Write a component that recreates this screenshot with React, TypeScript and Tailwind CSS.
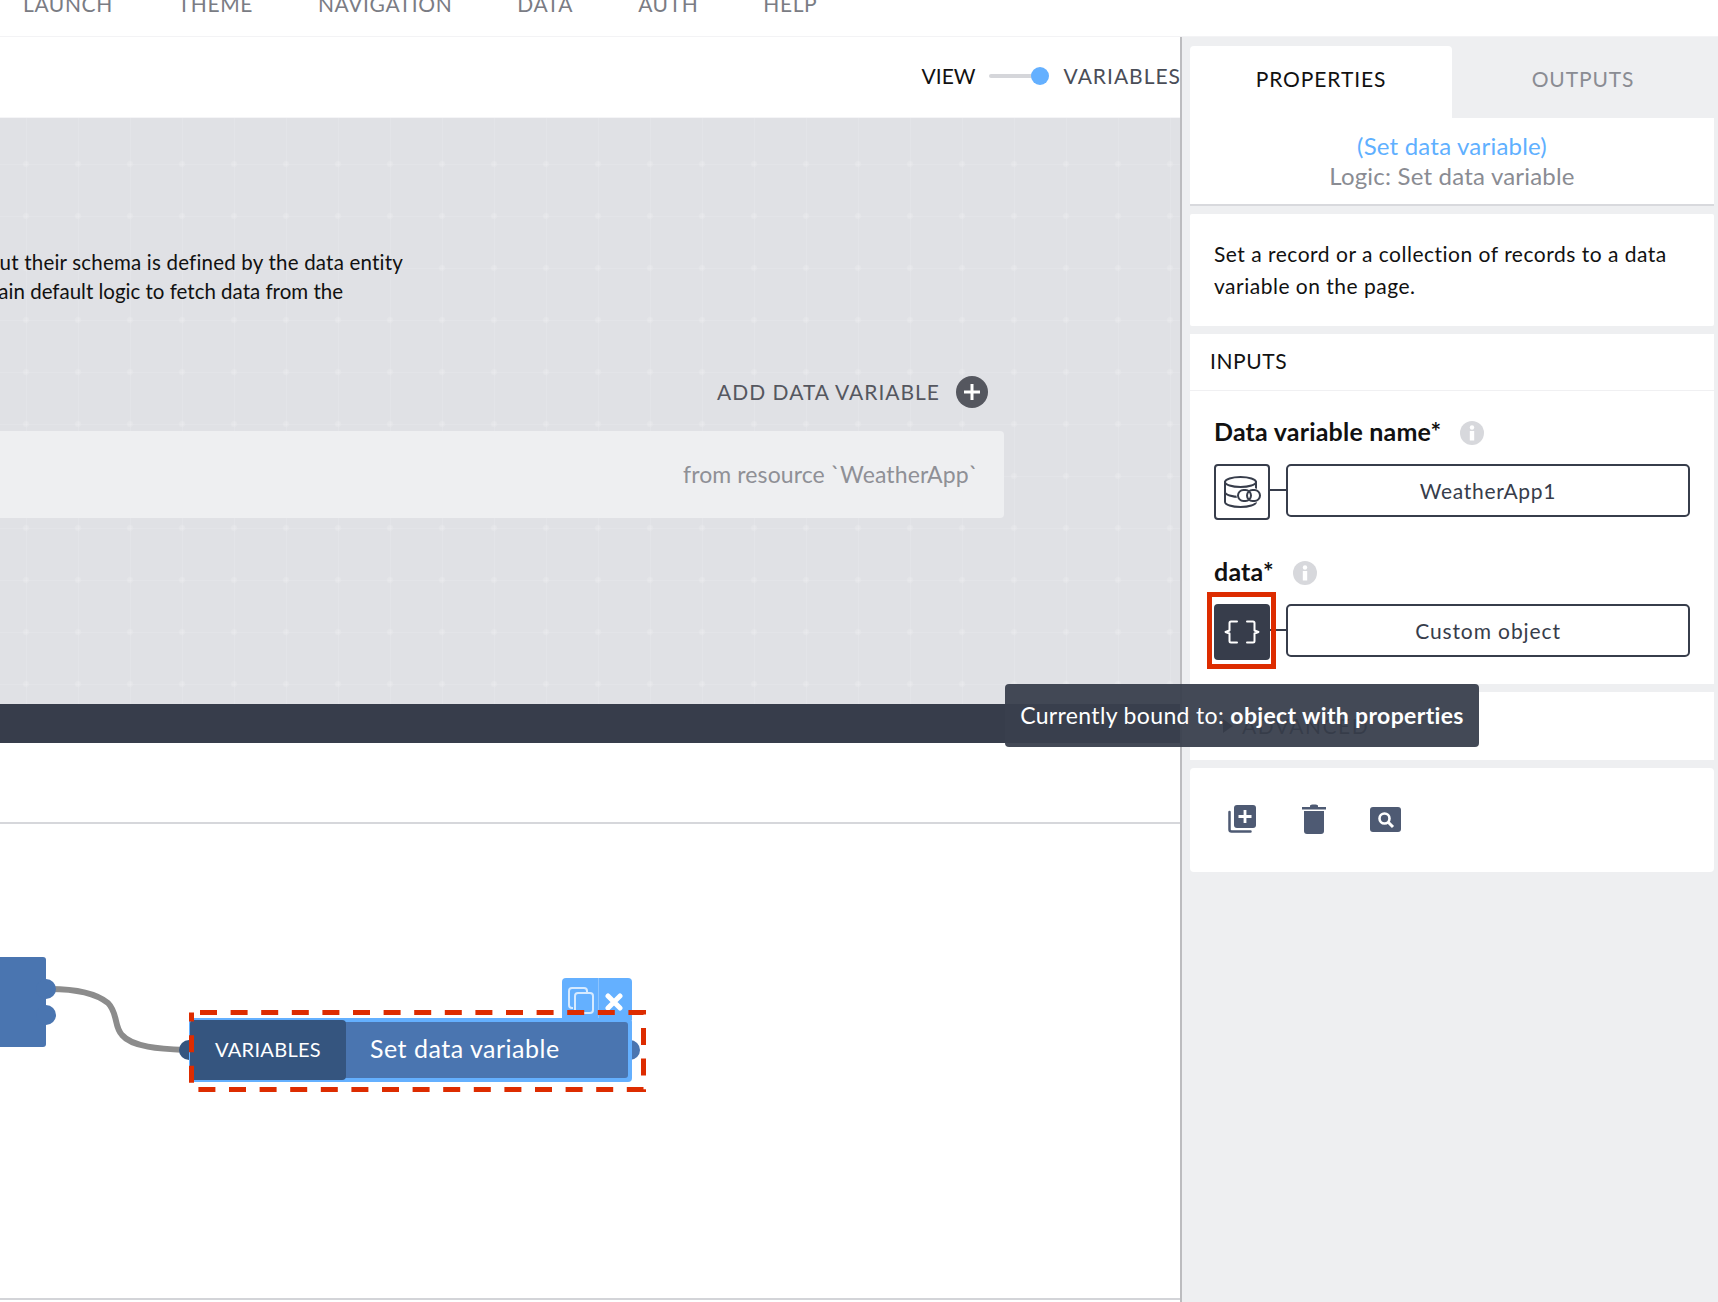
import React from "react";

const NAV = ["LAUNCH", "THEME", "NAVIGATION", "DATA", "AUTH", "HELP"];

function InfoDot() {
  return (
    <svg width="24" height="24" viewBox="0 0 24 24" className="shrink-0">
      <circle cx="12" cy="12" r="12" fill="#d7d8dc" />
      <circle cx="12" cy="6.5" r="2.2" fill="#fff" />
      <rect x="9.8" y="10" width="4.4" height="9.5" fill="#fff" />
    </svg>
  );
}

function DbIcon() {
  return (
    <svg width="37" height="32" viewBox="0 0 37 32" fill="none" stroke="#373d4b" strokeWidth="2" strokeLinecap="round" strokeLinejoin="round">
      <ellipse cx="16.500" cy="6" rx="15.500" ry="5" />
      <path d="M1 6v20c0 2.800 7 5 15.500 5S32 28.800 32 26" />
      <path d="M1 16c0 2.800 7 5 15.500 5" />
      <path d="M32 6v7" />
      <rect x="12.500" y="12" width="24" height="15" rx="7" fill="#fff" stroke="none" />
      <rect x="14" y="14" width="13" height="11" rx="5.500" />
      <rect x="23" y="14" width="13" height="11" rx="5.500" />
    </svg>
  );
}

function BracesIcon() {
  return (
    <svg width="36" height="24" viewBox="0 0 36 24" fill="none" stroke="#fff" strokeWidth="2" strokeLinecap="round" strokeLinejoin="round">
      <path d="M13 1.500H7A1.500 1.500 0 0 0 5.500 3v7.500L1.500 12l4 1.500V21A1.500 1.500 0 0 0 7 22.500h6" />
      <path d="M23 1.500h6A1.500 1.500 0 0 1 30.500 3v7.500l4 1.500-4 1.500V21a1.500 1.500 0 0 1-1.500 1.500h-6" />
    </svg>
  );
}

function ActionIcons() {
  return (
    <div className="flex items-center">
      <svg width="28" height="28" viewBox="0 0 28 28" className="ml-[38px]">
        <path d="M1.500 7v17.500a2 2 0 0 0 2 2h19" fill="none" stroke="#4e5a73" strokeWidth="2.500" strokeLinecap="round" />
        <rect x="6" y="0" width="22" height="23" rx="3" fill="#4e5a73" />
        <path d="M17 5v13M10.500 11.500h13" stroke="#fff" strokeWidth="2.800" />
      </svg>
      <svg width="24" height="30" viewBox="0 0 24 30" className="ml-[46px]">
        <path d="M0 3h24v2.500H0zM8 1.500C8 0 16 0 16 1.500V3H8z" fill="#4e5a73" />
        <path d="M2 7h20v20a3 3 0 0 1-3 3H5a3 3 0 0 1-3-3z" fill="#4e5a73" />
      </svg>
      <svg width="31" height="25" viewBox="0 0 31 25" className="ml-[44px]">
        <rect width="31" height="25" rx="3" fill="#4e5a73" />
        <circle cx="14.500" cy="11.500" r="5" fill="none" stroke="#fff" strokeWidth="2.600" />
        <path d="M18 15l5 5" stroke="#fff" strokeWidth="3" />
      </svg>
    </div>
  );
}

function FlowDiagram() {
  return (
    <div className="relative flex-1 bg-white border-b-2 border-[#d3d4d8]">
      <svg className="absolute left-0 top-[-1px]" width="200" height="300" fill="none">
        <path d="M50 166C80 166 98 172 108 180C118 190 114 204 122 212C132 224 160 226 185 227" stroke="#8c8c8c" strokeWidth="6" />
      </svg>
      <div className="absolute left-0 top-[133px] w-[46px] h-[90px] bg-[#4a75b0] rounded-r-[3px]" />
      <div className="absolute left-[36px] top-[155px] w-[20px] h-[20px] rounded-full bg-[#4a75b0]" />
      <div className="absolute left-[36px] top-[181px] w-[20px] h-[20px] rounded-full bg-[#4a75b0]" />

      <div className="absolute left-[179px] top-[216px] w-[20px] h-[20px] rounded-full bg-[#35557f]" />
      <div className="absolute left-[620px] top-[216px] w-[20px] h-[20px] rounded-full bg-[#4a75b0]" />

      <div className="absolute left-[562px] top-[154px] w-[70px] h-[42px] bg-[#64b0ff] rounded-t-[4px] flex">
        <div className="w-[37px] flex items-center justify-center border-r border-[#8cc4ff] pl-[2px] pt-[2px]">
          <svg width="26" height="27" viewBox="0 0 26 27" fill="none" stroke="#d6eaff" strokeWidth="2">
            <path d="M5 21H4a3 3 0 0 1-3-3V4a3 3 0 0 1 3-3h12a3 3 0 0 1 3 3v2" />
            <rect x="7" y="6" width="18" height="20" rx="3" />
          </svg>
        </div>
        <div className="flex-1 flex items-center justify-center pt-[6px] pr-[3px]">
          <svg width="18" height="18" viewBox="0 0 18 18" stroke="#fff" strokeWidth="5" strokeLinecap="round">
            <path d="M3 3l12 12M15 3L3 15" />
          </svg>
        </div>
      </div>

      <div className="absolute left-[189px] top-[194px] w-[443px] h-[64px] bg-[#64b0ff] rounded-[4px] flex items-stretch pl-[1px] pr-[4px] py-[2px]">
        <div className="flex-1 flex bg-[#4a75b0] rounded-[3px] my-[2px]">
          <div className="w-[156px] -my-[2px] bg-[#35557f] rounded-[4px] flex items-center justify-center pb-[2px] text-white text-[20px] tracking-[0.3px]">
            VARIABLES
          </div>
          <div className="flex items-center pl-[24px] pb-[2px] text-white text-[25px] tracking-[0.5px]">Set data variable</div>
        </div>
      </div>

      <svg className="absolute left-[189px] top-[186px]" width="457" height="82" fill="none">
        <path d="M11 2.500H454.500V79.500H2.500V2.500" stroke="#dd2c00" strokeWidth="5" strokeDasharray="17 13.600" />
      </svg>
    </div>
  );
}

export default function App() {
  return (
    <div
      className="relative w-[1718px] h-[1302px] overflow-hidden bg-white flex flex-col"
      style={{ fontFamily: "Lato, 'Open Sans', sans-serif" }}
    >
      <div className="h-[37px] shrink-0 overflow-hidden border-b border-[#f3f3f5] bg-white flex items-end pb-[20px] pl-[23px] gap-[65px] text-[#7a7c84] text-[21px] leading-[24px] tracking-[0.6px]">
        {NAV.map((n) => (
          <span key={n}>{n}</span>
        ))}
      </div>

      <div className="flex flex-1 min-h-0">
        <div className="w-[1180px] shrink-0 flex flex-col">
          <div className="h-[81px] shrink-0 flex items-center justify-end text-[21px] pb-[2px] border-b border-[#f5f5f7]">
            <span className="text-[#111]">VIEW</span>
            <div className="relative w-[58px] h-[4px] bg-[#d5d6da] ml-[13px] rounded">
              <div className="absolute right-[-2px] top-[-7px] w-[18px] h-[18px] rounded-full bg-[#64b0ff]" />
            </div>
            <span className="text-[#4a4d57] ml-[17px] whitespace-nowrap tracking-[1px] mr-[-1px]">VARIABLES</span>
          </div>

          <div className="h-[586px] shrink-0 bg-[#e0e1e5] bg-[radial-gradient(circle,rgba(255,255,255,0.16)_2px,transparent_4px),linear-gradient(rgba(255,255,255,0.1)_1px,transparent_1px),linear-gradient(90deg,rgba(255,255,255,0.1)_1px,transparent_1px)] bg-[length:52px_52px] bg-[position:0px_20px,26px_46px,26px_46px] flex flex-col pt-[130px] text-[#111] text-[20.5px]">
            <div className="h-[29px] leading-[29px] w-[403px] flex justify-end overflow-hidden whitespace-nowrap tracking-[0.2px]">
              <span className="shrink-0">ut their schema is defined by the data entity</span>
            </div>
            <div className="h-[29px] leading-[29px] w-[343px] flex justify-end overflow-hidden whitespace-nowrap">
              <span className="shrink-0">ain default logic to fetch data from the</span>
            </div>
            <div className="flex items-center justify-end w-[988px] mt-[70px] h-[32px] text-[#55575f] text-[21px] tracking-[1px]">
              <span>ADD DATA VARIABLE</span>
              <svg width="32" height="32" viewBox="0 0 32 32" className="ml-[16px]">
                <circle cx="16" cy="16" r="16" fill="#55575f" />
                <path d="M16 8v16M8 16h16" stroke="#fff" strokeWidth="3" />
              </svg>
            </div>
            <div className="mt-[23px] w-[1004px] h-[87px] bg-[#eeeff1] rounded-r-[4px] flex items-center justify-end pr-[26px] text-[#8f9096] text-[23px] tracking-[0.1px]">
              from resource `WeatherApp`
            </div>
          </div>

          <div className="h-[39px] shrink-0 bg-[#373d4b]" />
          <div className="h-[81px] shrink-0 bg-white border-b-2 border-[#d6d7db]" />
          <FlowDiagram />
          <div className="h-[2px] shrink-0 bg-white" />
        </div>

        <div className="w-[2px] shrink-0 bg-[#bcbcbf]" />

        <div className="flex-1 min-w-0 bg-[#eeeff1] pt-[9px] pl-[8px] pr-[4px] flex flex-col">
          <div className="flex h-[72px] shrink-0 text-[21px] tracking-[0.9px]">
            <div className="w-[262px] bg-white rounded-t-[4px] flex items-center justify-center pb-[6px] text-[#111]">PROPERTIES</div>
            <div className="flex-1 flex items-center justify-center pb-[6px] text-[#8a8c93]">OUTPUTS</div>
          </div>

          <div className="h-[88px] shrink-0 bg-white border-b-2 border-[#d8d9dd] pt-[13px] text-center text-[24px] leading-[30px] tracking-[0.2px]">
            <div className="text-[#5fb0ff]">(Set data variable)</div>
            <div className="text-[#8a8c93]">Logic: Set data variable</div>
          </div>

          <div className="h-[112px] shrink-0 mt-[8px] bg-white rounded-[2px] pl-[24px] pr-[20px] pt-[24px] text-[21px] leading-[32px] tracking-[0.5px] text-[#111]">
            Set a record or a collection of records to a data variable on the page.
          </div>

          <div className="h-[350px] shrink-0 mt-[8px] bg-white">
            <div className="h-[57px] border-b border-[#f0f0f2] flex items-center pl-[20px] pb-[2px] text-[21px] tracking-[0.6px] text-[#111]">INPUTS</div>
            <div className="pl-[24px] pr-[24px] pt-[27px]">
              <div className="flex items-center h-[30px] text-[25px] tracking-[0.2px] font-bold text-[#111]">
                <span className="-mt-[2px]">Data variable name*</span>
                <span className="ml-[19px]"><InfoDot /></span>
              </div>
              <div className="flex mt-[16px] h-[56px]">
                <div className="w-[56px] h-[56px] shrink-0 border-2 border-[#373d4b] rounded-[4px] flex items-center justify-center bg-white">
                  <DbIcon />
                </div>
                <div className="w-[16px] h-[2px] bg-[#373d4b] mt-[25px]" />
                <div className="flex-1 h-[53px] border-2 border-[#373d4b] rounded-[5px] flex items-center justify-center text-[21px] tracking-[0.7px] text-[#373d4b]">
                  WeatherApp1
                </div>
              </div>
              <div className="flex items-center h-[30px] mt-[38px] text-[25px] tracking-[0.2px] font-bold text-[#111]">
                <span className="-mt-[2px]">data*</span>
                <span className="ml-[19px]"><InfoDot /></span>
              </div>
              <div className="flex mt-[16px] h-[56px]">
                <div className="relative w-[56px] h-[56px] shrink-0 bg-[#373d4b] rounded-[4px] flex items-center justify-center">
                  <BracesIcon />
                  <div className="absolute left-[-7px] top-[-12px] w-[69px] h-[77px] border-[5px] border-[#dd2c00]" />
                </div>
                <div className="w-[16px] h-[2px] bg-[#373d4b] mt-[25px]" />
                <div className="flex-1 h-[53px] border-2 border-[#373d4b] rounded-[5px] flex items-center justify-center text-[21px] tracking-[0.9px] text-[#373d4b]">
                  Custom object
                </div>
              </div>
            </div>
          </div>

          <div className="h-[68px] shrink-0 mt-[8px] bg-white flex items-center pl-[33px] text-[#111] text-[21px] tracking-[1.5px]">
            <svg width="10" height="14" viewBox="0 0 10 14" className="mr-[9px]">
              <path d="M0 0l10 7-10 7z" fill="#111" />
            </svg>
            <span>ADVANCED</span>
          </div>

          <div className="h-[104px] shrink-0 mt-[8px] bg-white rounded-[4px] flex items-center pb-[2px]">
            <ActionIcons />
          </div>
        </div>
      </div>

      <div className="absolute left-[1005px] top-[684px] w-[474px] h-[63px] rounded-[4px] bg-[#393f4d]/95 flex items-center justify-center text-white text-[23px] tracking-[0.35px] whitespace-nowrap">
        <span>Currently bound to:&nbsp;</span>
        <span className="font-bold">object with properties</span>
      </div>
    </div>
  );
}
